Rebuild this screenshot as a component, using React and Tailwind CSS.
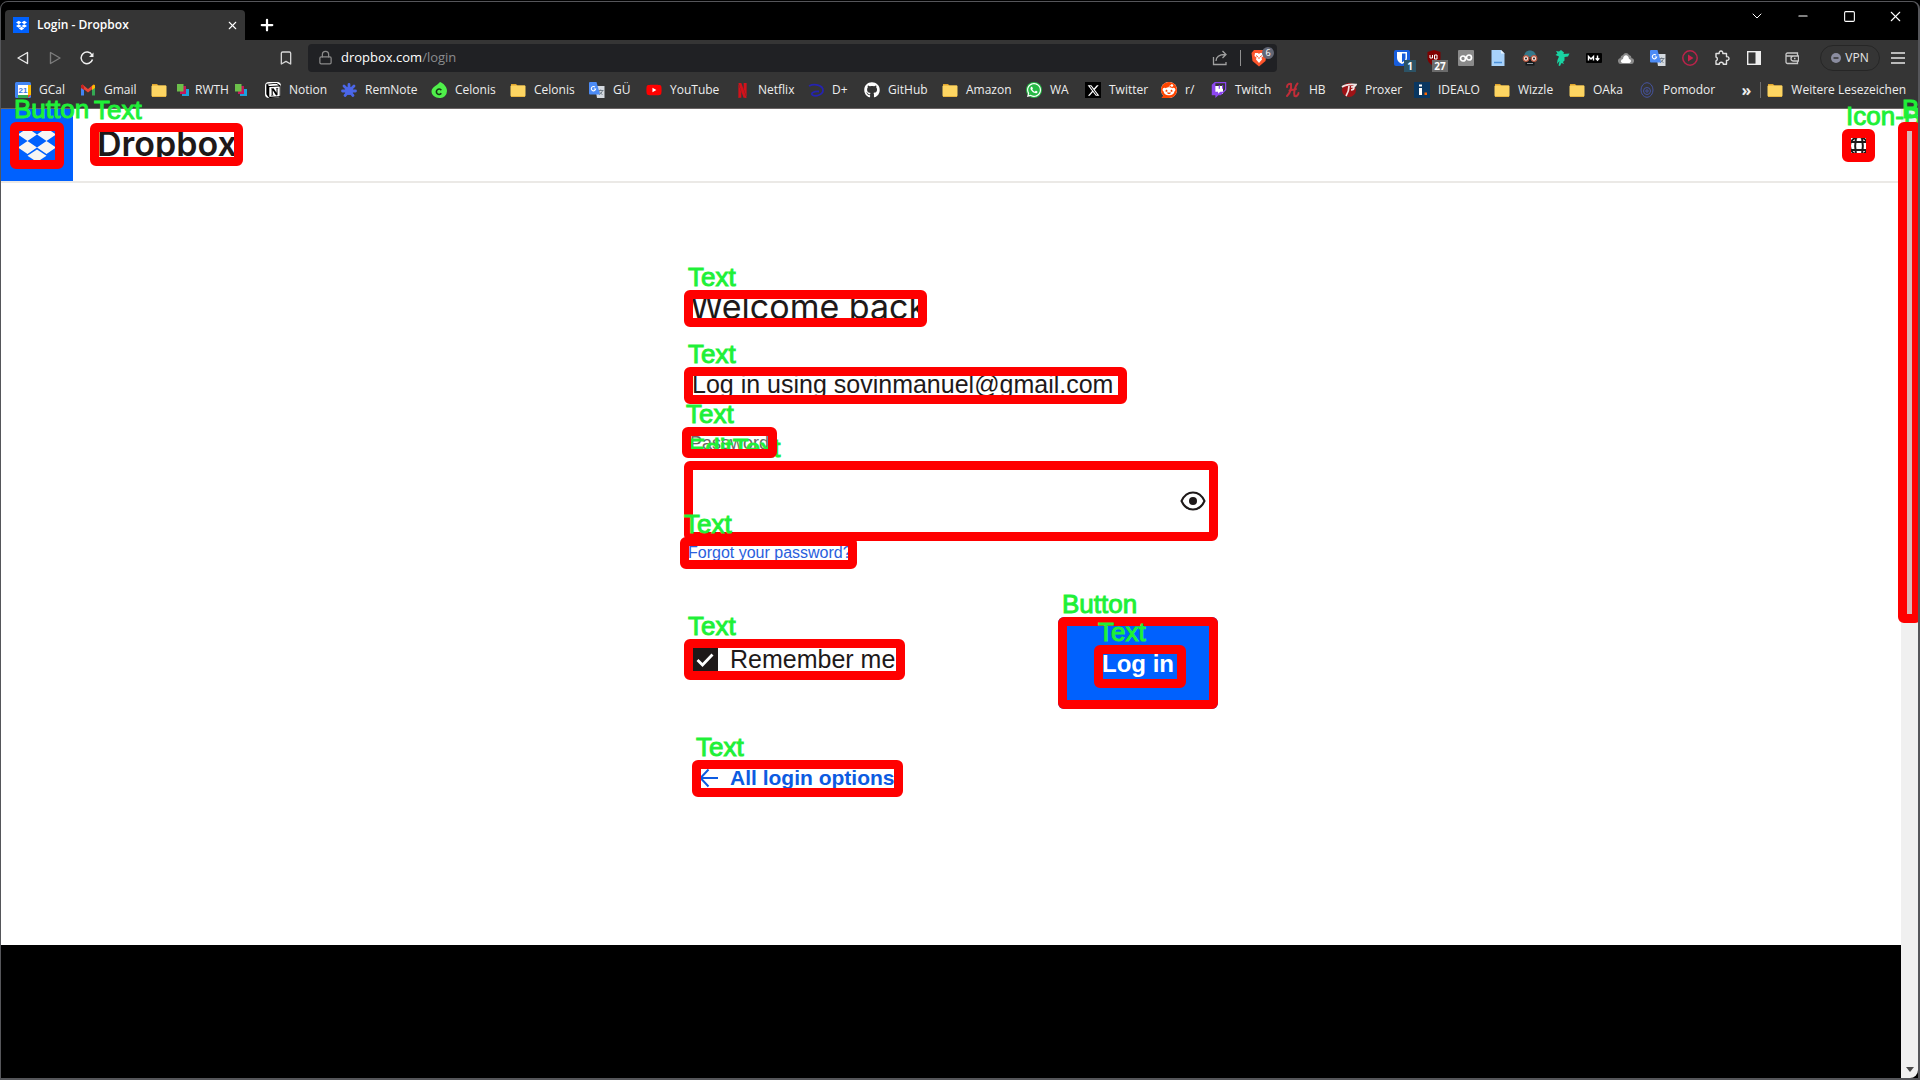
import React from "react";
import { FaDropbox, FaGithub, FaWhatsapp, FaXTwitter, FaReddit, FaTwitch, FaYoutube } from "react-icons/fa6";
import { SiNetflix, SiNotion } from "react-icons/si";
import { Bookmark, ChevronDown, Lock, Minus, Plus, Square, X } from "lucide-react";

/* A red frame with a green caption laid over the element it marks. */
function Mark({ label, className = "", frame = "z-20", caption = "z-30", children }) {
  return (
    <div className={"relative flex items-center " + className}>
      {children}
      <span aria-hidden="true" className={"pointer-events-none absolute inset-0 rounded-md border-[9px] border-[#ff0000] " + frame} />
      <span className={"pointer-events-none absolute -top-[26px] left-1 whitespace-nowrap text-[26px] leading-none text-[#1ff038] [-webkit-text-stroke:1px_#1ff038] " + caption}>
        {label}
      </span>
    </div>
  );
}

const Folder = () => (
  <svg viewBox="0 0 16 16" className="h-4 w-4">
    <path d="M1 2h5l1.5 1.500H15V6H1z" fill="#e0a52c" />
    <rect x="0.500" y="3.500" width="15" height="11" rx="1" fill="#fdd562" />
    <path d="M1 14.500h14" stroke="#e9b53d" />
  </svg>
);
const GCal = () => (
  <svg viewBox="0 0 16 16" className="h-4 w-4">
    <rect width="16" height="16" rx="1.500" fill="#4285f4" />
    <path d="M13 3h3v10h-3z" fill="#fbbc04" />
    <path d="M3 13h10v3H3z" fill="#34a853" />
    <path d="M13 13h3l-3 3z" fill="#ea4335" />
    <rect x="3" y="3" width="10" height="10" fill="#fff" />
    <text x="8" y="11" fontSize="8" fontWeight="700" textAnchor="middle" fill="#3b78e7" fontFamily="Liberation Sans">21</text>
  </svg>
);
const Gmail = () => (
  <svg viewBox="0 0 16 16" className="h-4 w-4">
    <path d="M1 4v9.500h3V6z" fill="#4285f4" />
    <path d="M15 4v9.500h-3V6z" fill="#34a853" />
    <path d="M1 3.500 2.500 2.500 8 7l5.500-4.500L15 3.500V5L8 10.500 1 5z" fill="#ea4335" />
    <path d="M12 4l2-1.500 1 1V6l-3 2z" fill="#fbbc04" />
    <path d="M1 3.500v2.500l3 2V5L2.500 2.500z" fill="#c5221f" />
  </svg>
);
const Cubes = () => (
  <svg viewBox="0 0 12 12" className="h-3 w-3">
    <rect x="5" y="5" width="7" height="7" fill="#1ba0dd" />
    <rect x="3" y="2" width="6" height="8" fill="#c2185b" />
    <rect width="6.500" height="7.500" fill="#6cc04a" />
  </svg>
);
const RemNote = () => (
  <svg viewBox="0 0 16 16" className="h-4 w-4" stroke="#4b66e8" strokeWidth="2.800" strokeLinecap="round">
    <path d="M8 9V2.500M8 9 3 4M8 9l5-5M8 9H1.500M8 9h6.500M8 9l-4 4.500M8 9l4 4.500" />
    <circle cx="8" cy="9" r="4" fill="#4b66e8" stroke="none" />
  </svg>
);
const CelonisIcon = () => (
  <svg viewBox="0 0 16 16" className="h-4 w-4">
    <path d="M9 0c3 1 7 4.500 7 9a7 7 0 0 1-7.500 7C4 16 .5 13 .5 9.500.5 5 6 4 9 0z" fill="#4ff04a" />
    <path d="M10.300 8.200A2.700 2.700 0 1 0 10.300 11.300" fill="none" stroke="#173a17" strokeWidth="1.600" />
  </svg>
);
const Translate = () => (
  <svg viewBox="0 0 16 16" className="h-4 w-4">
    <path d="M6 4h9.500v12H8z" fill="#d5dae0" />
    <path d="M9 8.500h5.500M11.700 7.500v1M13.500 8.500c-.5 2-2 3.500-3.500 4M10.500 9.500c.5 1.500 2 2.500 3 3" stroke="#68747f" fill="none" strokeWidth=".9" />
    <path d="M1 0h6.500l3.500 12.500H1a1 1 0 0 1-1-1V1a1 1 0 0 1 1-1z" fill="#4c8bf5" />
    <path d="M6 5A2.200 2.200 0 1 0 6.700 7H4.800" fill="none" stroke="#fff" strokeWidth="1.100" />
  </svg>
);
const Disney = () => (
  <svg viewBox="0 0 16 16" className="h-4 w-4" fill="none" stroke="#2523b0" strokeWidth="1.800">
    <path d="M1 4c5-2.500 14-1.500 14 4.500 0 4-7 6.500-10.500 4.500-2-1.500 1-4 6.500-3.500" />
  </svg>
);
const Glyph = ({ color, bg = "", children }) => (
  <span className={"flex h-4 w-4 items-center justify-center " + color + " " + bg}>{children}</span>
);
const Humble = () => (
  <svg viewBox="0 0 16 16" className="h-4 w-4" fill="none" stroke="#c02d38" strokeWidth="2" strokeLinecap="round">
    <path d="M2 5c0-3 3-3.500 4-3 .5 4-1 9-4 12M12.500 1.500C10 4 8.500 10 9.500 14c1.500 1 4-1 4-3M4.500 8.500 11 7" />
  </svg>
);
const Proxer = () => (
  <svg viewBox="0 0 16 16" className="h-4 w-4">
    <circle cx="8" cy="8" r="7" fill="#a01316" />
    <path d="M1 5c4-3 9-3 14-2.500-1 2-3 2.500-5 2.500M8 4c0 4-1 7-3 10M10 8c2 0 3-1 3-3" fill="none" stroke="#f1e4e4" strokeWidth="1.700" />
  </svg>
);
const Idealo = () => (
  <svg viewBox="0 0 16 16" className="h-4 w-4">
    <rect width="16" height="16" fill="#0a3761" />
    <path d="M5 6h3v7H5zM5 2.500h3v2H5z" fill="#fff" />
    <path d="M10.500 10.500H13V13h-2.500z" fill="#ff6600" />
  </svg>
);
const Pomodor = () => (
  <svg viewBox="0 0 16 16" className="h-4 w-4" fill="none" stroke="#4654a0">
    <ellipse cx="8" cy="8" rx="6" ry="7.300" />
    <circle cx="8" cy="9" r="3.500" />
    <circle cx="8" cy="9" r="1.200" />
  </svg>
);

const BOOKMARKS = [
  ["GCal", <GCal />, "w-[65px]"],
  ["Gmail", <Gmail />, "w-[71px]"],
  ["RWTH", <Folder />, "w-[114px]"],
  ["Notion", <Glyph color="text-black" bg="rounded-sm bg-white"><SiNotion size={15} /></Glyph>, "w-[76px]"],
  ["RemNote", <RemNote />, "w-[90px]"],
  ["Celonis", <CelonisIcon />, "w-[79px]"],
  ["Celonis", <Folder />, "w-[79px]"],
  ["GÜ", <Translate />, "w-[57px]"],
  ["YouTube", <Glyph color="text-[#ff0000]"><span className="absolute h-2 w-2 bg-white" /><FaYoutube size={16} className="relative" /></Glyph>, "w-[88px]"],
  ["Netflix", <Glyph color="text-[#d2121b]"><SiNetflix size={15} /></Glyph>, "w-[74px]"],
  ["D+", <Disney />, "w-[56px]"],
  ["GitHub", <Glyph color="text-white"><FaGithub size={16} /></Glyph>, "w-[78px]"],
  ["Amazon", <Folder />, "w-[84px]"],
  ["WA", <Glyph color="text-white" bg="rounded-full bg-[#25b944]"><FaWhatsapp size={16} /></Glyph>, "w-[59px]"],
  ["Twitter", <Glyph color="text-white" bg="bg-black"><FaXTwitter size={13} /></Glyph>, "w-[76px]"],
  ["r/", <Glyph color="text-[#ff4500]" bg="rounded-full bg-white"><FaReddit size={16} /></Glyph>, "w-[50px]"],
  ["Twitch", <Glyph color="text-[#8c46f0]"><span className="absolute h-2 w-2 bg-white" /><FaTwitch size={16} className="relative" /></Glyph>, "w-[74px]"],
  ["HB", <Humble />, "w-[56px]"],
  ["Proxer", <Proxer />, "w-[73px]"],
  ["IDEALO", <Idealo />, "w-[80px]"],
  ["Wizzle", <Folder />, "w-[75px]"],
  ["OAka", <Folder />, "w-[70px]"],
  ["Pomodor", <Pomodor />, "w-[90px]"],
];

function TitleBar() {
  return (
    <div className="flex h-[38px] items-end bg-black pl-1">
      <div className="flex h-[30px] w-60 items-center rounded-t-sm bg-[#353535] pl-2 pr-1.5 text-white">
        <span className="flex h-4 w-4 items-center justify-center bg-[#0061fe]">
          <FaDropbox size={11} />
        </span>
        <span className="ml-2 flex-1 font-['Open_Sans'] text-[12px] font-semibold">Login - Dropbox</span>
        <button aria-label="Close tab"><X size={13} strokeWidth={2} /></button>
      </div>
      <button aria-label="New tab" className="ml-3 flex h-[30px] w-5 items-center justify-center text-white">
        <Plus size={18} strokeWidth={3} />
      </button>
      <div className="ml-auto flex h-[38px] items-start pt-1.5 text-white">
        <button aria-label="Search tabs" className="flex h-4 w-[46px] items-center justify-center"><ChevronDown size={16} strokeWidth={1.500} /></button>
        <button aria-label="Minimise" className="flex h-4 w-[46px] items-center justify-center"><Minus size={14} strokeWidth={2} /></button>
        <button aria-label="Maximise" className="flex h-4 w-[46px] items-center justify-center"><Square size={13} strokeWidth={2} /></button>
        <button aria-label="Close" className="flex h-4 w-[46px] items-center justify-center"><X size={17} strokeWidth={1.500} /></button>
      </div>
    </div>
  );
}

const Ext = ({ label, children }) => (
  <button aria-label={label} className="relative flex h-7 w-8 items-center justify-center">{children}</button>
);

function Toolbar() {
  return (
    <div className="flex h-9 items-center pb-px font-['Open_Sans'] text-[#d5d5d5]">
      <button aria-label="Back" className="ml-3 flex w-5 justify-center">
        <svg viewBox="0 0 14 14" className="h-3.5 w-3.5" fill="none" stroke="#e8e8e8" strokeWidth="1.400" strokeLinejoin="round"><path d="M11.500 1.500v11L2 7z" /></svg>
      </button>
      <button aria-label="Forward" className="ml-3 flex w-5 justify-center">
        <svg viewBox="0 0 14 14" className="h-3.5 w-3.5" fill="none" stroke="#7c7c7c" strokeWidth="1.400" strokeLinejoin="round"><path d="M2.500 1.500v11L12 7z" /></svg>
      </button>
      <button aria-label="Reload" className="ml-3 flex w-5 justify-center">
        <svg viewBox="0 0 14 14" className="h-3.5 w-3.5" fill="none" stroke="#f0f0f0" strokeWidth="1.500"><path d="M12.500 8.500A5.800 5.800 0 1 1 12 4" /><path d="M13.500 1.500v4.500H9z" fill="#f0f0f0" stroke="none" /></svg>
      </button>
      <button aria-label="Bookmark this page" className="ml-[179px] flex w-5 justify-center"><Bookmark size={16} strokeWidth={2} /></button>
      <div className="ml-3 flex h-7 max-w-[969px] flex-1 items-center rounded bg-[#202124] pl-2.5 pr-0.5">
        <Lock size={15} strokeWidth={2} className="text-[#8a8a8a]" />
        <span className="ml-2 flex-1 text-[13px] text-white">dropbox.com<span className="text-[#8b8c8e]">/login</span></span>
        <button aria-label="Share">
          <svg viewBox="0 0 16 16" className="h-4 w-4" fill="none" stroke="#a0a0a0" strokeWidth="1.300"><path d="M1.500 7v7.500H14V12M4 11c0-4 3-6.500 9-6.500M10.500 1 14 4.500 10.500 8" /></svg>
        </button>
        <span className="ml-3 mr-2.5 h-4 w-px bg-[#909090]" />
        <button aria-label="Shields" className="relative h-5 w-6">
          <svg viewBox="0 0 16 18" className="h-[18px] w-4"><path d="M3 1h10l2.500 3-1 8L8 17.500 1.500 12l-1-8z" fill="#fb542b" /><path d="M4 4h3l1 1 1-1h3l.5 3-2 1.500.5 2L8 14l-3-3.500.5-2-2-1.500z" fill="#fff" /><path d="M5 6.500 7 8M11 6.500 9 8M8 8v2" stroke="#fb542b" /></svg>
          <span className="absolute -top-px left-[11px] flex h-3 w-3 items-center justify-center rounded-full bg-[#636775] text-[9px] text-white">6</span>
        </button>
      </div>
      <div className="ml-auto flex items-center pr-3">
        <Ext label="Bitwarden">
          <svg viewBox="0 0 16 16" className="h-4 w-4"><rect width="16" height="16" rx="2" fill="#175ddc" /><path d="M3 2h10v6c0 3-2.500 5-5 6-2.500-1-5-3-5-6z" fill="#fff" /><path d="M8 3.500h3.500V8c0 2-1.500 3.500-3.500 4.300z" fill="#175ddc" /></svg>
          <span className="absolute bottom-0 left-[18px] h-3 w-3 bg-[#2c5366] text-center text-[10px] font-bold leading-3 text-white">1</span>
        </Ext>
        <Ext label="uBlock">
          <svg viewBox="0 0 16 16" className="h-4 w-4"><path d="M8 0l6.500 2v6c0 4-3 6.500-6.500 8-3.500-1.500-6.500-4-6.500-8V2z" fill="#800000" /><path d="M4 5v3h2.500V5M8.500 9V5H11v4H8.500" fill="none" stroke="#fff" /></svg>
          <span className="absolute bottom-0 left-3.5 h-3 w-4 bg-[#6b6b6b] text-center text-[10px] font-bold leading-3 text-white">27</span>
        </Ext>
        <Ext label="Link tool">
          <svg viewBox="0 0 16 16" className="h-4 w-4"><rect width="16" height="16" rx="1" fill="#8a8a8a" /><circle cx="5" cy="8.500" r="2.500" fill="none" stroke="#fff" strokeWidth="1.700" /><circle cx="11" cy="7.500" r="2.500" fill="none" stroke="#fff" strokeWidth="1.700" /></svg>
        </Ext>
        <Ext label="Document">
          <svg viewBox="0 0 16 16" className="h-4 w-4"><path d="M1.500 0H11l3.500 3.500V16h-13z" fill="#a8d2fa" /><path d="M11 0v3.500h3.500z" fill="#e8f4ff" /><path d="M4 12.500h8" stroke="#4a90d9" strokeWidth="1.500" /></svg>
        </Ext>
        <Ext label="Incognito">
          <svg viewBox="0 0 16 16" className="h-4 w-4"><path d="M2 7c0-4.500 3-6.500 6-6.500S14 2.500 14 7z" fill="#35788a" /><path d="M3.500 9h9v6.500h-9z" fill="#15191c" /><circle cx="4" cy="8.500" r="2.800" fill="#f3dfd8" stroke="#b8553d" strokeWidth="1.200" /><circle cx="12" cy="8.500" r="2.800" fill="#f3dfd8" stroke="#b8553d" strokeWidth="1.200" /><circle cx="4" cy="8.500" r="1" fill="#222" /><circle cx="12" cy="8.500" r="1" fill="#222" /><path d="M5 13.500h6" stroke="#8b9397" /></svg>
        </Ext>
        <Ext label="Bird">
          <svg viewBox="0 0 16 16" className="h-4 w-4"><path d="M2 1l3 .5L7 0l3 2.500L9.500 4l6-.5-1.500 3-3.500.5v3.500L9 12l1 2-2.500-1L6 16l-1.500-.5L5.500 11 3 14l.5-4L5 6.500 1.500 5l2-1.500z" fill="#19d3a2" /></svg>
        </Ext>
        <Ext label="Markdown">
          <svg viewBox="0 0 16 10" className="h-2.5 w-4"><rect width="16" height="10" rx="1" fill="#000" /><path d="M2.500 7.500v-4L5 6l2.500-2.500v4M11.500 2.500v4.500M9.700 5.300l1.800 2 1.800-2" fill="none" stroke="#fff" strokeWidth="1.400" /></svg>
        </Ext>
        <Ext label="Cloud">
          <svg viewBox="0 0 16 14" className="h-3.5 w-4"><path d="M3.500 13a3 3 0 0 1-1-6A3 3 0 0 1 5 4a3.300 3.300 0 0 1 6 0 3 3 0 0 1 2.500 3 3 3 0 0 1-1 6z" fill="#8a8a8a" /><path d="M4.500 12c-3-1-1-4 .5-4 .5-5 5.500-5 6 0 2 0 3 3 .5 4z" fill="#fff" /></svg>
        </Ext>
        <Ext label="Translate"><Translate /></Ext>
        <Ext label="Player">
          <svg viewBox="0 0 16 16" className="h-4 w-4"><circle cx="8" cy="8" r="7.200" fill="none" stroke="#b9234a" strokeWidth="1.500" /><path d="M6 4.500 11.500 8 6 11.500z" fill="#c9204a" /></svg>
        </Ext>
        <Ext label="Extensions">
          <svg viewBox="0 0 16 16" className="h-4 w-4" fill="none" stroke="#e0e0e0" strokeWidth="1.400" strokeLinejoin="round"><path d="M2 3.500h3.200a1.900 1.900 0 1 1 3.600 0H12.500v3.200a1.900 1.900 0 1 1 0 3.600v4H9.300a2 2 0 0 0-4 0H2v-3.500a2 2 0 0 0 0-3.800z" /></svg>
        </Ext>
        <Ext label="Side panel">
          <svg viewBox="0 0 14 14" className="h-3.5 w-3.5"><rect x=".7" y=".7" width="12.600" height="12.600" fill="none" stroke="#eee" strokeWidth="1.400" /><path d="M8.500 1H13v12H8.500z" fill="#eee" /></svg>
        </Ext>
        <span className="w-1.5" />
        <Ext label="Wallet">
          <svg viewBox="0 0 14 14" className="h-3.5 w-3.5" fill="none" stroke="#c8c8c8" strokeWidth="1.300"><path d="M12.500 5V2H2.500a1.500 1.500 0 0 0-1.500 1.500V11a1.500 1.500 0 0 0 1.500 1.500h10V10M1 5h12.500v5H8.500a2.500 2.500 0 0 1 0-5" /><path d="M9 7.500h1.500" /></svg>
        </Ext>
        <button className="ml-3 flex h-[26px] w-[60px] items-center justify-center gap-1 rounded-full border border-[#262626] text-[12px] text-[#e6e6e6]">
          <svg viewBox="0 0 10 10" className="h-2.5 w-2.5"><circle cx="5" cy="5" r="5" fill="#8b8da0" /><path d="M2.500 5h5" stroke="#353535" strokeWidth="1.500" /></svg>
          VPN
        </button>
        <button aria-label="Menu" className="ml-2.5 flex w-4 justify-center">
          <svg viewBox="0 0 14 12" className="h-3 w-3.5" stroke="#e6e6e6" strokeWidth="1.400"><path d="M0 1h14M0 6h14M0 11h14" /></svg>
        </button>
      </div>
    </div>
  );
}

function BookmarksBar() {
  return (
    <nav aria-label="Bookmarks" className="flex h-[33px] items-center border-b border-[#6a6464] pl-3.5 pb-1 font-['Open_Sans'] text-[12px] text-[#eeeeee]">
      {BOOKMARKS.map(([name, icon, width], i) => (
        <a key={i} href="#" className={"flex shrink items-center whitespace-nowrap " + width}>
          <span className="relative flex h-4 w-4 shrink-0 items-center justify-center">{icon}</span>
          {name === "RWTH" ? (
            <span className="ml-2.5 flex items-center gap-1.5"><Cubes />RWTH<Cubes /></span>
          ) : (
            <span className="ml-2">{name}</span>
          )}
        </a>
      ))}
      <div className="ml-auto flex items-center pr-3">
        <button aria-label="More bookmarks" className="w-4 text-[16px] font-bold leading-4">»</button>
        <span className="mx-1.5 h-4 w-px bg-[#6f6f6f]" />
        <a href="#" className="flex items-center gap-2 whitespace-nowrap"><Folder />Weitere Lesezeichen</a>
      </div>
    </nav>
  );
}

function Header() {
  return (
    <header className="flex h-[74px] shrink-0 items-start border-b-2 border-[#ebe9e6]">
      <a href="#" aria-label="Dropbox home" className="flex h-[72px] w-[72px] items-start bg-[#0061fe] pl-[9px] pt-[13px]">
        <Mark label="Button" className="h-[47px] w-[54px] justify-center pb-0.5">
          <svg viewBox="0 0 38 34" className="h-[34px] w-[38px]" fill="#f7f5f2">
            <path d="M9.500 0 19 6.500 9.500 13 0 6.500zM28.500 0 38 6.500 28.500 13 19 6.500z" />
            <path d="M9.500 13 19 19.500 9.500 26 0 19.500zM28.500 13 38 19.500 28.500 26 19 19.500z" />
            <path d="M19 21.500 28.500 27.800 19 34 9.500 27.800z" />
          </svg>
        </Mark>
      </a>
      <Mark label="Text" className="ml-[17px] mt-3.5 h-[43px] w-[153px] pb-0.5 pl-[7px]">
        <span className="font-['Inter'] text-[34px] font-semibold leading-none text-[#1e1919]">Dropbox</span>
      </Mark>
      <Mark label="Icon-Button" caption="z-10" className="ml-auto mr-[26px] mt-5 h-[33px] w-[33px] justify-center">
        <button aria-label="Language">
          <svg viewBox="0 0 20 20" className="h-5 w-5" fill="none" stroke="#1e1919" strokeWidth="2">
            <circle cx="10" cy="10" r="9" />
            <path d="M1 6h18M1 14h18M7 1.500c-1 5-1 12 0 17M13 1.500c1 5 1 12 0 17" />
          </svg>
        </button>
      </Mark>
    </header>
  );
}

function LoginForm() {
  return (
    <form className="mx-auto mt-[107px] w-full max-w-[534px] text-[#1e1919]" onSubmit={(e) => e.preventDefault()}>
      <Mark label="Text" className="h-[37px] w-[243px] pb-1 pl-1.5">
        <h1 className="whitespace-nowrap font-['Inter'] text-[34px] leading-none">Welcome back</h1>
      </Mark>
      <Mark label="Text" className="mt-10 h-[37px] w-[443px] pb-0.5 pl-2">
        <p className="whitespace-nowrap text-[25px] leading-none">Log in using sovinmanuel@gmail.com</p>
      </Mark>
      <Mark label="Text" className="-ml-0.5 mt-[23px] h-[31px] w-[95px] pl-2">
        <label htmlFor="password" className="text-[18px] leading-none text-[#6b6664]">Password</label>
      </Mark>
      <Mark label="EditText" caption="z-10" className="mt-[3px] h-20">
        <input id="password" type="password" className="h-full w-full bg-white pl-4 pr-12 outline-none" />
        <button type="button" aria-label="Show password" className="absolute right-3">
          <svg viewBox="0 0 26 20" className="h-5 w-[26px]" fill="none" stroke="#1e1919" strokeWidth="2">
            <path d="M1.500 10C4 4.500 8 1.500 13 1.500S22 4.500 24.500 10C22 15.500 18 18.500 13 18.500S4 15.500 1.500 10z" />
            <circle cx="13" cy="10" r="4" fill="#1e1919" stroke="none" />
          </svg>
        </button>
      </Mark>
      <Mark label="Text" className="-ml-1 -mt-1 h-8 w-[177px] pl-2">
        <a href="#" className="whitespace-nowrap text-[16px] leading-none text-[#2a60dd]">Forgot your password?</a>
      </Mark>
      <div className="mt-12 flex items-start justify-between">
        <Mark label="Text" className="mt-[22px] h-[41px] w-[221px] pl-2">
          <label className="flex items-center gap-3 whitespace-nowrap text-[25px] leading-none">
            <span className="relative flex h-[26px] w-[26px] items-center justify-center">
              <input type="checkbox" defaultChecked className="absolute inset-0 appearance-none bg-[#1e1919]" />
              <svg viewBox="0 0 18 14" className="relative h-3.5 w-[18px]" fill="none" stroke="#fff" strokeWidth="2.800"><path d="M1.500 7 6.500 12 16.500 1.500" /></svg>
            </span>
            Remember me
          </label>
        </Mark>
        <button type="submit" className="rounded-md bg-[#0061fe] text-white">
          <Mark label="Button" className="h-[92px] w-40 items-start pl-9 pt-7">
            <Mark label="Text" className="h-[43px] w-[92px] pb-1.5 pl-2">
              <span className="whitespace-nowrap text-[24px] font-bold leading-none">Log in</span>
            </Mark>
          </Mark>
        </button>
      </div>
      <Mark label="Text" className="ml-2 mt-[51px] h-[37px] w-[211px] pb-0.5 pl-1.5">
        <a href="#" className="flex items-center gap-3 whitespace-nowrap text-[21px] font-bold leading-none text-[#0d5be1]">
          <svg viewBox="0 0 20 20" className="h-5 w-5" fill="none" stroke="#0d5be1" strokeWidth="2"><path d="M20 10H2.500M10.500 1.500 2.500 10l8 8.500" /></svg>
          All login options
        </a>
      </Mark>
    </form>
  );
}

function ScrollBar() {
  return (
    <div className="flex w-[17px] shrink-0 flex-col items-center justify-between rounded-br-lg bg-[#f0f0f0]">
      <div className="flex flex-col items-center">
        <svg viewBox="0 0 8 5" className="mt-1 h-[5px] w-2"><path d="M4 0 8 5H0z" fill="#909090" /></svg>
        <Mark label="Button" className="mt-1 h-[501px] w-[23px] justify-center">
          <span className="h-full w-2 bg-[#dab6b6]" />
        </Mark>
      </div>
      <svg viewBox="0 0 8 5" className="mb-1.5 h-[5px] w-2"><path d="M0 0h8L4 5z" fill="#4a4a4a" /></svg>
    </div>
  );
}

export default function App() {
  return (
    <div className="flex min-h-screen flex-col overflow-hidden bg-black pt-px font-['Liberation_Sans',sans-serif]">
      <div className="flex flex-1 flex-col overflow-hidden rounded-t-lg border border-r-2 border-b-2 border-[#55565a] bg-[#353535]">
        <TitleBar />
        <Toolbar />
        <BookmarksBar />
        <div className="flex flex-1 bg-black">
          <div className="flex min-w-0 flex-1 flex-col">
            <main className="flex min-h-[836px] flex-col bg-white">
              <Header />
              <LoginForm />
            </main>
          </div>
          <ScrollBar />
        </div>
      </div>
    </div>
  );
}
